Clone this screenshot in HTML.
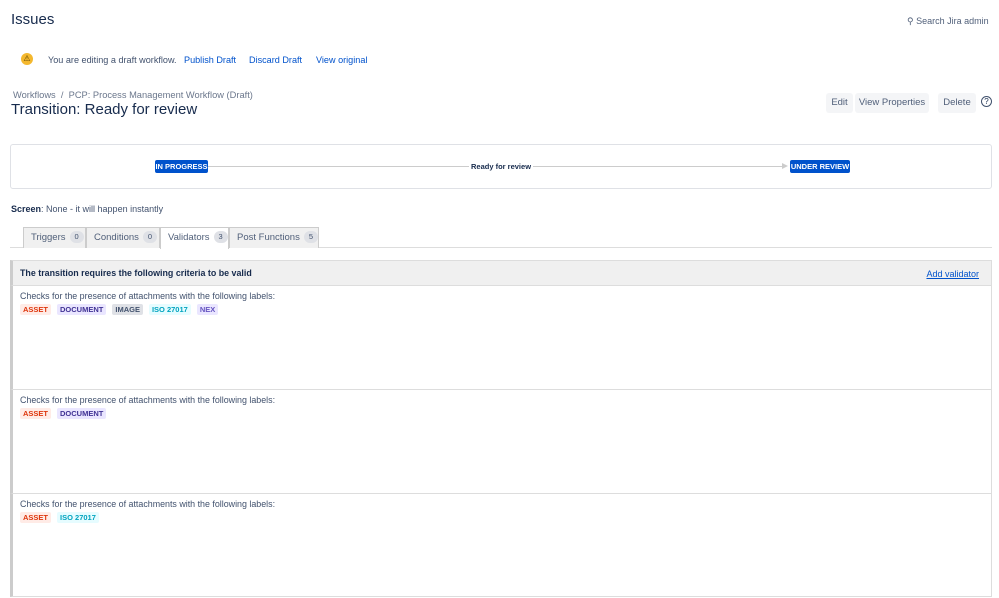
<!DOCTYPE html><html><head><style>
*{box-sizing:border-box;margin:0;padding:0}
body{width:999px;height:598px;background:#fff;font-family:"Liberation Sans",sans-serif;color:#172b4d;position:relative;overflow:hidden;font-size:11px}
div,span,a{white-space:nowrap}
.a{position:absolute}
a{color:#0052cc;text-decoration:none}
.btn{position:absolute;top:93px;height:20px;background:#f4f5f7;color:#505f79;font-size:9.5px;line-height:20px;text-align:center;border-radius:3px}
.lz{display:inline-block;font-size:7.5px;font-weight:bold;padding:1px 3px;border-radius:2px;margin-right:6px;line-height:9px}
.tab{position:absolute;top:227px;height:21px;border:1px solid #ccc;border-bottom:none;background:#f0f0f0;color:#505f79;font-size:9.5px;line-height:20px;padding-left:7px}
.tab span{display:inline-block;background:#dfe1e6;border-radius:8px;font-size:7.5px;padding:1px 5px;margin-left:4px;line-height:10px;color:#42526e;vertical-align:1px}
.row{position:absolute;left:10px;width:982px;border-bottom:1px solid #ddd;border-right:1px solid #ddd;border-left:3px solid #ccc;padding:5px 7px;font-size:8.9px;color:#42526e}
</style></head><body>
<div class="a" style="left:11px;top:11px;font-size:15px">Issues</div>
<div class="a" style="left:907px;top:16px;font-size:9px;color:#505f79">&#9906; Search Jira admin</div>
<div class="a" style="left:21px;top:53px;width:12px;height:12px;border-radius:50%;background:#f4b82e;color:#5a4300;font-size:8px;text-align:center;line-height:12px">⚠</div>
<div class="a" style="left:48px;top:55px;font-size:9.1px;color:#42526e">You are editing a draft workflow.</div>
<a class="a" style="left:184px;top:55px;font-size:9.1px">Publish Draft</a>
<a class="a" style="left:249px;top:55px;font-size:9.1px">Discard Draft</a>
<a class="a" style="left:316px;top:55px;font-size:9.1px">View original</a>
<div class="a" style="left:13px;top:90px;font-size:9.3px;color:#6b778c">Workflows &nbsp;/&nbsp; PCP: Process Management Workflow (Draft)</div>
<div class="a" style="left:11px;top:101px;font-size:15px">Transition: Ready for review</div>
<div class="btn" style="left:826px;width:27px">Edit</div>
<div class="btn" style="left:855px;width:74px">View Properties</div>
<div class="btn" style="left:938px;width:38px">Delete</div>
<div class="a" style="left:981px;top:96px;width:11px;height:11px;border:1px solid #42526e;border-radius:50%;font-size:8px;text-align:center;line-height:9px">?</div>
<div class="a" style="left:10px;top:144px;width:982px;height:45px;border:1px solid #dfe1e6;border-radius:3px"></div>
<div class="a" style="left:208px;top:166px;width:578px;height:1px;background:#ccc"></div>
<div class="a" style="left:782px;top:163px;border-left:6px solid #ccc;border-top:3px solid transparent;border-bottom:3px solid transparent"></div>
<div class="a" style="left:155px;top:160px;width:53px;text-align:center;background:#0052cc;color:#fff;font-size:7.5px;font-weight:bold;padding:2px 0;border-radius:2px">IN PROGRESS</div>
<div class="a" style="left:469px;top:160px;background:#fff;font-size:7.5px;font-weight:bold;padding:2px 2px">Ready for review</div>
<div class="a" style="left:790px;top:160px;width:60px;text-align:center;background:#0052cc;color:#fff;font-size:7.5px;font-weight:bold;padding:2px 0;border-radius:2px">UNDER REVIEW</div>
<div class="a" style="left:11px;top:204px;font-size:9px;color:#42526e"><b style="color:#172b4d">Screen</b>: None - it will happen instantly</div>
<div class="a" style="left:10px;top:247px;width:982px;height:1px;background:#ddd"></div>
<div class="tab" style="left:23px;width:63px">Triggers<span>0</span></div>
<div class="tab" style="left:86px;width:74px">Conditions<span>0</span></div>
<div class="tab" style="left:160px;width:69px;background:#fff;height:22px">Validators<span>3</span></div>
<div class="tab" style="left:229px;width:90px">Post Functions<span>5</span></div>
<div class="row" style="top:260px;height:26px;background:#f0f0f0;border-top:1px solid #ddd;color:#172b4d;font-weight:bold;font-size:8.9px;line-height:15px">The transition requires the following criteria to be valid<a style="position:absolute;right:12px;top:6px;font-weight:normal;text-decoration:underline;font-size:9px">Add validator</a></div>
<div class="row" style="top:286px;height:104px">Checks for the presence of attachments with the following labels:<div style="margin-top:3px"><span class="lz" style="background:#ffebe6;color:#de350b">ASSET</span><span class="lz" style="background:#eae6ff;color:#403294">DOCUMENT</span><span class="lz" style="background:#dfe1e6;color:#42526e">IMAGE</span><span class="lz" style="background:#e6fcff;color:#00a3bf">ISO 27017</span><span class="lz" style="background:#eae6ff;color:#6554c0">NEX</span></div></div>
<div class="row" style="top:390px;height:104px">Checks for the presence of attachments with the following labels:<div style="margin-top:3px"><span class="lz" style="background:#ffebe6;color:#de350b">ASSET</span><span class="lz" style="background:#eae6ff;color:#403294">DOCUMENT</span></div></div>
<div class="row" style="top:494px;height:103px">Checks for the presence of attachments with the following labels:<div style="margin-top:3px"><span class="lz" style="background:#ffebe6;color:#de350b">ASSET</span><span class="lz" style="background:#e6fcff;color:#00a3bf">ISO 27017</span></div></div>
</body></html>
